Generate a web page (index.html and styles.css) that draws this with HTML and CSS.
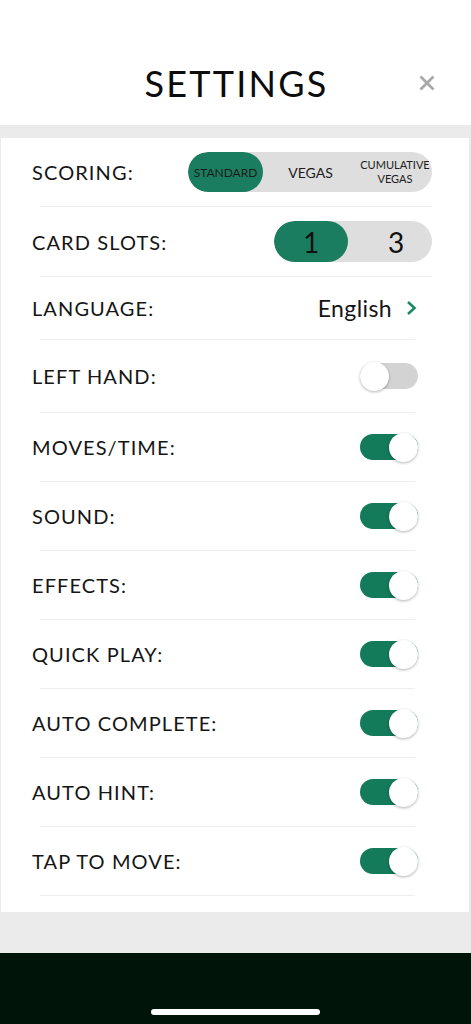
FILE: index.html
```html
<!DOCTYPE html>
<html lang="en">
<head>
  <meta charset="UTF-8" />
  <title>Settings</title>
  <link rel="stylesheet" href="styles.css">
</head>
<body>

  <div class="header">
    <span></span>
    <h1>SETTINGS</h1>
    <button class="close" aria-label="Close">
      <svg width="16" height="16" viewBox="0 0 16 16"><path d="M1.5 1.5 L14.5 14.5 M14.5 1.5 L1.5 14.5" stroke="#a9a9a9" stroke-width="2.8" stroke-linecap="butt"/></svg>
    </button>
  </div>

  <div class="panel">
    <div class="row r-scoring">
      <span class="label">SCORING:</span>
      <div class="seg seg-scoring">
        <div class="opt active small">STANDARD</div>
        <div class="opt mid">VEGAS</div>
        <div class="opt tiny">CUMULATIVE<br>VEGAS</div>
      </div>
    </div>
    <hr class="sep wide">

    <div class="row r-slots">
      <span class="label">CARD SLOTS:</span>
      <div class="seg seg-slots">
        <div class="opt active num">1</div>
        <div class="opt num">3</div>
      </div>
    </div>
    <hr class="sep wide">

    <div class="row r-lang">
      <span class="label">LANGUAGE:</span>
      <div class="lang">English
        <svg width="11" height="16" viewBox="0 0 11 16"><path d="M2 2 L8.5 8 L2 14" fill="none" stroke="#1a8a66" stroke-width="2.6"/></svg>
      </div>
    </div>
    <hr class="sep">

    <div class="row r-left">
      <span class="label">LEFT HAND:</span>
      <div class="toggle"><div class="knob"></div></div>
    </div>
    <hr class="sep">

    <div class="row">
      <span class="label">MOVES/TIME:</span>
      <div class="toggle on"><div class="knob"></div></div>
    </div>
    <hr class="sep">

    <div class="row">
      <span class="label">SOUND:</span>
      <div class="toggle on"><div class="knob"></div></div>
    </div>
    <hr class="sep">

    <div class="row">
      <span class="label">EFFECTS:</span>
      <div class="toggle on"><div class="knob"></div></div>
    </div>
    <hr class="sep">

    <div class="row">
      <span class="label">QUICK PLAY:</span>
      <div class="toggle on"><div class="knob"></div></div>
    </div>
    <hr class="sep">

    <div class="row">
      <span class="label">AUTO COMPLETE:</span>
      <div class="toggle on"><div class="knob"></div></div>
    </div>
    <hr class="sep">

    <div class="row">
      <span class="label">AUTO HINT:</span>
      <div class="toggle on"><div class="knob"></div></div>
    </div>
    <hr class="sep">

    <div class="row">
      <span class="label">TAP TO MOVE:</span>
      <div class="toggle on"><div class="knob"></div></div>
    </div>
    <hr class="sep">
  </div>

  <div class="footer">
    <div class="home-bar"></div>
  </div>

</body>
</html>
```

FILE: styles.css
```css
body {
  margin: 0;
  width: 471px;
  height: 1024px;
  background: #ebebeb;
  font-family: 'Lato', 'Noto Sans', sans-serif;
  color: #151515;
  overflow: hidden;
  display: flex;
  flex-direction: column;
}

.header {
  height: 125px;
  box-sizing: border-box;
  padding-top: 40px;
  background: #fff;
  display: grid;
  grid-template-columns: 1fr auto 1fr;
  align-items: center;
  margin-bottom: 13px;
}

.header h1 {
  margin: 0;
  font-size: 36px;
  font-weight: 400;
  letter-spacing: 2.2px;
  padding-left: 2px;
  color: #0c0c0c;
}

.close {
  justify-self: end;
  margin-right: 36px;
  background: none;
  border: none;
  padding: 0;
  width: 16px;
  height: 16px;
  display: flex;
}

.panel {
  background: #fff;
  margin: 0 2px 0 1px;
  padding-bottom: 16px;
}

.row {
  display: flex;
  align-items: center;
  justify-content: space-between;
  height: 68px;
  padding: 0 51px 0 31px;
}

.r-scoring { padding-right: 37px; }
.r-slots { height: 69px; padding-right: 37px; }
.r-lang { height: 62px; padding-right: 52px; }
.r-left { height: 72px; }

.label {
  font-size: 20px;
  letter-spacing: 1.1px;
}

.sep {
  margin: 0 54px 0 39px;
  border: none;
  border-top: 1px solid #eeeeee;
  height: 0;
}

.sep.wide {
  margin-right: 37px;
}

.seg {
  display: flex;
  background: #dedede;
  border-radius: 21px;
  overflow: hidden;
}

.seg .opt {
  display: flex;
  align-items: center;
  justify-content: center;
  text-align: center;
  border-radius: 21px;
  color: #1c1c1c;
}

.seg .opt.active {
  background: #1b7d5f;
}

.seg-scoring { height: 40px; width: 244px; }
.seg-scoring .opt { width: 75px; }
.seg-scoring .opt.mid { width: 95px; font-size: 14px; }
.seg-scoring .opt.small { font-size: 12px; }
.seg-scoring .opt.tiny { width: 74px; font-size: 11px; line-height: 14px; }

.seg-slots { height: 41px; width: 158px; }
.seg-slots .opt { width: 74px; }
.seg-slots .opt + .opt { width: 84px; padding-left: 12px; box-sizing: border-box; }
.seg-slots .num { font-size: 28px; color: #111; }

.lang {
  display: flex;
  align-items: center;
  gap: 14px;
  font-size: 23px;
  letter-spacing: 0.4px;
}

.toggle {
  width: 58px;
  height: 26px;
  border-radius: 13px;
  background: #d3d3d3;
  display: flex;
  align-items: center;
}

.toggle.on {
  background: #137a5a;
  justify-content: flex-end;
}

.knob {
  width: 29px;
  height: 29px;
  border-radius: 50%;
  background: #fff;
  box-shadow: 0 1px 3px rgba(0, 0, 0, 0.3);
  flex-shrink: 0;
}

.footer {
  margin-top: auto;
  height: 71px;
  background: #00140a;
  display: flex;
  justify-content: center;
  align-items: flex-end;
}

.home-bar {
  width: 169px;
  height: 6px;
  border-radius: 3px;
  background: #fff;
  margin-bottom: 9px;
}
```
